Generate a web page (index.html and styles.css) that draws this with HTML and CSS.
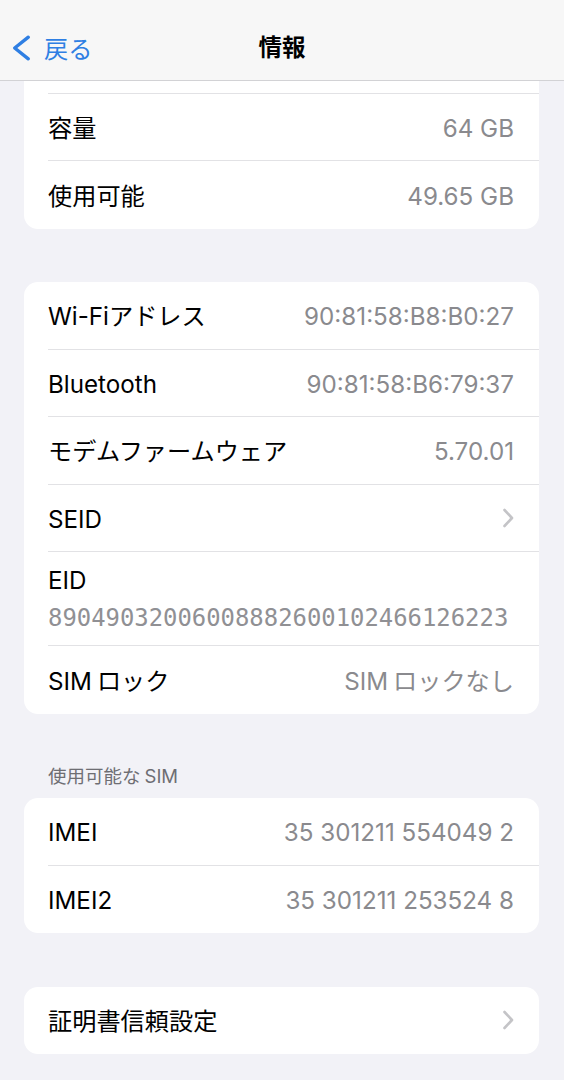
FILE: index.html
```html
<!DOCTYPE html>
<html lang="ja">
<head>
<meta charset="utf-8">
<title>情報</title>
<link rel="stylesheet" href="styles.css">
</head>
<body>
<header class="nav">
  <div class="nav-bar">
    <a class="back" href="#">
      <svg class="back-icon" width="20" height="28" viewBox="0 0 20 28"><path d="M17.3 3.2 L3.7 14 L17.3 24.8" fill="none" stroke="currentColor" stroke-width="3.4" stroke-linecap="round" stroke-linejoin="round"/></svg>
      <span>戻る</span>
    </a>
    <h1 class="title">情報</h1>
    <span class="spacer"></span>
  </div>
</header>

<main class="content">
  <section class="card card-clipped">
    <div class="row-tail"></div>
    <div class="row"><span class="label">容量</span><span class="value">64 GB</span></div>
    <div class="row"><span class="label">使用可能</span><span class="value">49.65 GB</span></div>
  </section>

  <section class="card gap">
    <div class="row"><span class="label">Wi-Fiアドレス</span><span class="value">90:81:58:B8:B0:27</span></div>
    <div class="row"><span class="label">Bluetooth</span><span class="value">90:81:58:B6:79:37</span></div>
    <div class="row"><span class="label">モデムファームウェア</span><span class="value">5.70.01</span></div>
    <div class="row"><span class="label">SEID</span><svg class="chev" width="14" height="22" viewBox="0 0 14 22"><path d="M3.5 3 L11 11 L3.5 19" fill="none" stroke="currentColor" stroke-width="2.6" stroke-linecap="round" stroke-linejoin="round"/></svg></div>
    <div class="row row-stack"><span class="label">EID</span><span class="mono">89049032006008882600102466126223</span></div>
    <div class="row"><span class="label">SIM<span class="jspace"></span>ロック</span><span class="value">SIM<span class="jspace"></span>ロックなし</span></div>
  </section>

  <h2 class="section-header">使用可能な<span class="jspace-s"></span>SIM</h2>
  <section class="card">
    <div class="row"><span class="label">IMEI</span><span class="value">35 301211 554049 2</span></div>
    <div class="row"><span class="label">IMEI2</span><span class="value">35 301211 253524 8</span></div>
  </section>

  <section class="card gap">
    <div class="row"><span class="label">証明書信頼設定</span><svg class="chev" width="14" height="22" viewBox="0 0 14 22"><path d="M3.5 3 L11 11 L3.5 19" fill="none" stroke="currentColor" stroke-width="2.6" stroke-linecap="round" stroke-linejoin="round"/></svg></div>
  </section>
</main>
</body>
</html>
```

FILE: styles.css
```css
* { box-sizing: border-box; }

html, body {
  margin: 0;
  padding: 0;
  background: #f2f2f7;
  font-family: Inter, "Noto Sans CJK JP", sans-serif;
  color: #000;
}

.nav {
  height: 81px;
  padding-top: 14px;
  background: #f7f7f7;
  border-bottom: 1px solid #d2d2d5;
}

.nav-bar {
  height: 67px;
  display: grid;
  grid-template-columns: 1fr auto 1fr;
  align-items: center;
}

.back {
  display: flex;
  align-items: center;
  gap: 13px;
  padding-left: 11px;
  color: #2f7fe3;
  text-decoration: none;
  font-size: 24.2px;
}

.back-icon { display: block; }

.title {
  margin: 0;
  font-size: 23.5px;
  font-weight: 700;
  line-height: 30px;
}

.content {
  padding-bottom: 40px;
}

.card {
  margin: 0 25px 0 24px;
  background: #fff;
  border-radius: 14px;
  overflow: hidden;
}

.card-clipped {
  border-top-left-radius: 0;
  border-top-right-radius: 0;
}

.gap { margin-top: 53.5px; }

.row-tail {
  height: 12.5px;
  margin-left: 24px;
  border-bottom: 1px solid #e2e2e5;
}

.row {
  height: 67.5px;
  margin-left: 24px;
  padding-right: 25px;
  padding-top: 4px;
  display: flex;
  align-items: center;
  justify-content: space-between;
  border-bottom: 1px solid #e2e2e5;
}

.row:last-child { border-bottom: none; }

.label {
  font-size: 24.2px;
  line-height: 30px;
  color: #000;
}

.value {
  font-size: 24.2px;
  line-height: 30px;
  color: #8a8a8e;
}

.jspace { display: inline-block; width: 5px; }
.jspace-s { display: inline-block; width: 4px; }

.chev {
  display: block;
  color: #c4c4c7;
  margin-right: -1px;
  margin-top: -4px;
}

.row-stack {
  height: 94px;
  flex-direction: column;
  align-items: flex-start;
  justify-content: flex-start;
  padding-top: 14px;
  gap: 7px;
}

.mono {
  font-family: "DejaVu Sans Mono", "Liberation Mono", monospace;
  font-size: 23.9px;
  line-height: 30px;
  color: #909094;
  letter-spacing: 0;
}

.section-header {
  margin: 51px 0 11.5px 48px;
  font-size: 18.5px;
  line-height: 22px;
  font-weight: 400;
  color: #6e6e73;
}
```
